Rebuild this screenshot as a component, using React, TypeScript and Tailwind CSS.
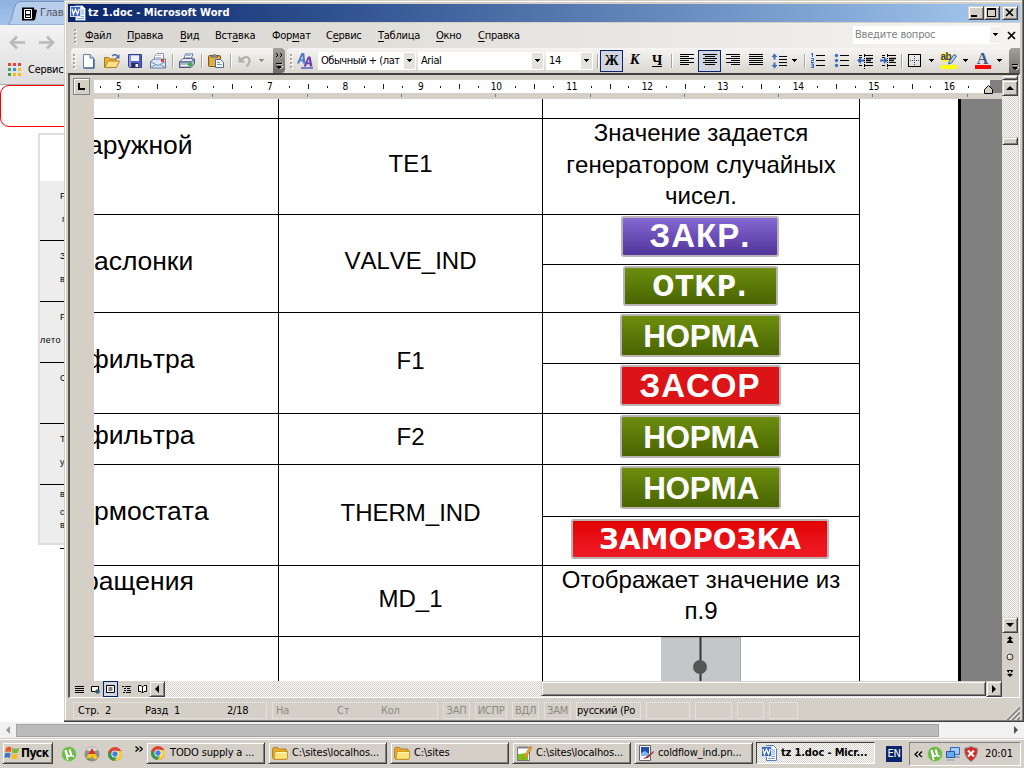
import React from 'react';
import type { ReactNode } from 'react';

const hatch = 'bg-[repeating-conic-gradient(#ffffff_0%_25%,#d4d0c8_0%_50%)] bg-[length:2px_2px]';
const raised = 'border border-t-[#d4d0c8] border-l-[#d4d0c8] border-r-[#404040] border-b-[#404040] bg-[#d4d0c8] shadow-[inset_1px_1px_0_#ffffff,inset_-1px_-1px_0_#808080]';

function Icon({ children, w = 16, h = 16, className = '' }: { children: ReactNode; w?: number; h?: number; className?: string }) {
  return (
    <svg width={w} height={h} viewBox={`0 0 ${w} ${h}`} className={`shrink-0 ${className}`}>
      {children}
    </svg>
  );
}

/* ---------- shared glyphs ---------- */
const Down = ({ className = '', fill = '#000' }: { className?: string; fill?: string }) => (
  <Icon w={7} h={4} className={className}><path d="M1 0h5v1h-1v1h-1v1h-1v-1h-1v-1h-1z" fill={fill} /></Icon>
);
const Sep = ({ className = '' }: { className?: string }) => (
  <div className={`h-[14px] w-[2px] shrink-0 border-r border-l border-l-[#a5a4a0] border-r-white ${className}`} />
);
const Handle = ({ className = '' }: { className?: string }) => (
  <Icon w={4} h={16} className={className}>
    {[1, 5, 9, 13].map((y) => (
      <g key={y}><rect x="1" y={y + 1} width="2" height="2" fill="#fff" /><rect x="0" y={y} width="2" height="2" fill="#a9a7a1" /></g>
    ))}
  </Icon>
);
const Chrome = () => (
  <Icon>
    <circle cx="8" cy="8" r="7" fill="#dd4232" />
    <path d="M1.800 4.700A7 7 0 0 0 7.300 15L10.8 9.7 8 8 5 9.7z" fill="#2f9e54" />
    <path d="M14.400 5H8.5l2.6 4.3L7.3 15A7 7 0 0 0 14.400 5z" fill="#f7cf39" />
    <circle cx="8" cy="8" r="3.6" fill="#fff" /><circle cx="8" cy="8" r="2.7" fill="#3f7fe0" />
  </Icon>
);
const Torrent = () => (
  <Icon>
    <circle cx="8" cy="8" r="7.700" fill="#a8d093" /><circle cx="8" cy="8" r="7" fill="#6fb94a" />
    <path d="M3.500 4.500l2-.700 1.600 4.600q.700 1.400 2 .700l-1.500-5.300 2-.500 1.900 6.200 1.800.200-.300 1.200-2.400.200-.800-1q-1.600 1.500-3.200.600l.900 3.200-1.600.300z" fill="#fff" />
  </Icon>
);
const Folder = () => (
  <Icon>
    <path d="M.5 13V4l1-1.5h4L7 4h7v2h1.5v7.5l-1 .9H2z" fill="#e9a923" stroke="#9b6a0e" strokeWidth=".7" />
    <path d="M3 6.5h12.5V13l-1 1.2H2z" fill="#ffe47c" stroke="#c48d18" strokeWidth=".7" /><path d="M4 7.5h10.5" stroke="#fff8c8" />
  </Icon>
);
const WordIcon = () => (
  <Icon>
    <path d="M5.5.5h7l3 3v12h-10z" fill="#fff" stroke="#5a7cc2" /><path d="M11 5h3m-3 2h3m-3 2h3m-7 2.500h7m-7 2h7" stroke="#7f9ed4" />
    <rect x=".5" y="1.500" width="10" height="10" fill="#3c68b8" stroke="#cfdcf3" />
    <path d="M2 4l1.400 5.200L5.500 4.300l2 4.900L9.200 4" fill="none" stroke="#fff" strokeWidth="1.300" />
  </Icon>
);

/* ---------- standard toolbar icons ---------- */
const NewDoc = () => (
  <Icon><path d="M3.500 1.500h6.500l3.500 3.500v10h-10z" fill="#fff" stroke="#6380ae" /><path d="M4 15h10V6" fill="none" stroke="#2f4f86" strokeWidth="1.200" /><path d="M10 1.500V5h3.500" fill="#cddaf0" stroke="#4c6a9e" /></Icon>
);
const OpenIcon = () => (
  <Icon><path d="M.5 14V4.500h4l1.500 1.500h6v8z" fill="#e9b43e" stroke="#a97614" /><path d="M.8 14.500L4 8h11.500l-3.200 6.500z" fill="#ffe08a" stroke="#b98318" /><path d="M8 3q3-2.500 5.500 0" fill="none" stroke="#4d6a9d" strokeWidth="1.300" /><path d="M15.500 1v4.500H11z" fill="#4d6a9d" /></Icon>
);
const SaveIcon = () => (
  <Icon><path d="M1.500 1.500h13v13h-12l-1-1z" fill="#4f5dc8" stroke="#333f94" /><path d="M2 2h2v12H2z" fill="#8794ea" /><path d="M4 2h8v6H4z" fill="#eef2fb" /><path d="M4 2.500h8" stroke="#b9c4e8" /><path d="M4.500 10h7v4.500h-7z" fill="#262e55" /><path d="M8.500 11h2.500v3H8.500z" fill="#f5f7fe" /></Icon>
);
const MailIcon = () => (
  <Icon><path d="M4.500 7V3.500L7 .5h6.500v7" fill="#fff" stroke="#8094b5" /><path d="M6 4.500h5M7 2.500h4" stroke="#b7c4da" /><path d="M.5 8.500L4 6h11.500v9H.5z" fill="#dfe8f8" stroke="#5f7baa" /><path d="M1 9l7 3.500L15 9M1 14.500l5-3m9 3l-5-3" fill="none" stroke="#6f88b2" /><rect x="11" y="6" width="3" height="3" fill="#dd402f" /></Icon>
);
const PrintIcon = () => (
  <Icon><path d="M5 6l1.500-5h7.500l-2 5z" fill="#fff" stroke="#5a74a2" /><path d="M7.500 2.500h4m-4.500 2h4" stroke="#96a9ca" /><path d="M.5 9l3.500-3.500h10.500L13 9z" fill="#e5ebf5" stroke="#53698f" /><path d="M.5 9H12l3.500-3v4.500L12 14.500H.5z" fill="#a9b8d0" stroke="#46597c" /><path d="M2 12.500h9" stroke="#fff" /><rect x="9" y="10" width="4" height="3" fill="#36b43c" /></Icon>
);
const PasteIcon = () => (
  <Icon><rect x=".5" y="2.500" width="12" height="11" rx="1" fill="#d39a34" stroke="#835b13" /><path d="M2 4h9v9H2z" fill="#e3ae45" /><path d="M3.500 4V2.500h2L6.500 1l1 1.500h2V4z" fill="#b9bfc9" stroke="#555c69" /><path d="M7.500 6.500h5l3 3v5h-8z" fill="#f9fbff" stroke="#4a6aa5" /><path d="M9 9.500h3m-3 2h5" stroke="#7595c9" /></Icon>
);
const UndoIcon = () => (
  <Icon><path d="M1.500 2.500v7h7L6 7q3-3.500 5-1 1.500 3-2.500 7l2 1q4.500-4.800 2.800-8.500Q9.800.8 4.200 5.200z" fill="#b2b0aa" /></Icon>
);
const StylesIcon = () => (
  <Icon><path d="M0 10.500L4.500 0h2.800l1 10.500H5.900l-.2-2.300H3l-1 2.300zM3.700 6.500h2L5.500 2.500z" fill="#4e79c4" /><path d="M6.500 13.500L11 3.500h2.500L15.500 13.500h-2.600l-.3-2.300H9.800l-.9 2.300zM10.500 9.500h1.900L12 6z" fill="#6d3fae" /><path d="M4 15h12" stroke="#3543bb" strokeWidth="1.200" /></Icon>
);

/* ---------- formatting icons ---------- */
function Lines({ rows }: { rows: [number, number][] }) {
  return <Icon h={13} w={14}>{rows.map(([x, w], i) => <rect key={i} x={x} y={i * 2} width={w} height="1" fill="#000" />)}</Icon>;
}
const AlignLeft = () => <Lines rows={[[0, 14], [0, 9], [0, 14], [0, 9], [0, 14], [0, 9]]} />;
const AlignCenter = () => <Lines rows={[[0, 14], [2, 10], [0, 14], [2, 10], [0, 14], [2, 10]]} />;
const AlignRight = () => <Lines rows={[[0, 14], [5, 9], [0, 14], [5, 9], [0, 14], [5, 9]]} />;
const Justify = () => <Lines rows={[[0, 14], [0, 14], [0, 14], [0, 14], [0, 14], [0, 14]]} />;
const Spacing = () => (
  <Icon><path d="M3.500.5L6.500 4h-2v2.500h-2V4h-2zM3.500 15.500L.5 12h2V9.500h2V12h2z" fill="#3e6fc4" /><path d="M8 3.500h8m-8 3h8m-8 3h8m-8 3h8" stroke="#000" /></Icon>
);
const Numbered = () => (
  <Icon>
    <path d="M6 3.500h9m-9 5h9m-9 5h9" stroke="#000" />
    <path d="M2.500 1v4M1 2h1.500M1 6.500h2.500v2H1.500v2H4M1 12h2.500v3.500H1m.5-1.700h2" fill="none" stroke="#3563bd" />
  </Icon>
);
const Bullets = () => (
  <Icon>{[3, 8, 13].map((y) => <g key={y}><circle cx="2.500" cy={y + 0.5} r="1.700" fill="#3e6fc4" /><path d={`M6 ${y + 0.5}h9`} stroke="#000" /></g>)}</Icon>
);
const IndentIcon = ({ out = false }: { out?: boolean }) => (
  <Icon>
    <path d="M2 2.500h3m2 0h9M9 5.500h7M9 7.500h5M9 9.500h7M2 12.500h3m2 0h9M2 4.500h3" stroke="#000" />
    <path d="M9 5.500h7M9 7.500h5" stroke="#000" strokeWidth="1.400" />
    <path d={out ? 'M0 7.500L4 4v2.500h4v2H4V11z' : 'M8 7.500L4 4v2.500H0v2h4V11z'} fill="#3563bd" />
    <path d="M7.500 1v15" stroke="#000" strokeDasharray="1 1" />
  </Icon>
);
const BorderIcon = () => (
  <Icon w={13} h={13}><rect x=".5" y=".5" width="12" height="12" fill="none" stroke="#000" /><path d="M6.500 2v10M2 6.500h10" stroke="#34466e" strokeDasharray="1 1" /></Icon>
);
const Highlight = () => (
  <div className="relative h-4 w-4">
    <div className="h-[9px] w-[10px] bg-[#fff34b] font-['Liberation_Sans'] text-[10px] leading-[8px] font-bold tracking-[-0.5px] text-[#37404d]">ab</div>
    <Icon className="absolute top-0 left-0"><path d="M8 9L13 1.500l2.500 1.500L10.500 10 7.500 11z" fill="#bcd1f0" stroke="#3a5c9c" /><path d="M0 12h16v4H0z" fill="#ff0" /></Icon>
  </div>
);
const FontColor = () => (
  <div className="flex h-4 w-4 flex-col items-center">
    <div className="h-3 font-['Liberation_Serif'] text-[16px] leading-[12px] font-bold text-[#39578f]">A</div>
    <div className="h-1 w-4 bg-[#f00]" />
  </div>
);
function Slot({ children, w = 'w-[23px]', className = '' }: { children: ReactNode; w?: string; className?: string }) {
  return <div className={`flex h-[22px] shrink-0 items-center justify-center ${w} ${className}`}>{children}</div>;
}
function Combo({ text, w }: { text: string; w: string }) {
  return (
    <div className={`flex h-[18px] shrink-0 overflow-hidden bg-white p-px ${w}`}>
      <div className="flex-1 overflow-hidden pl-[2px] leading-[15px] whitespace-nowrap">{text}</div>
      <div className="flex w-[11px] shrink-0 items-center justify-center bg-[#e4e2dd]"><Down /></div>
    </div>
  );
}

/* ---------- Word window ---------- */
function TitleButton({ children, className = '' }: { children: ReactNode; className?: string }) {
  return <div className={`h-[14px] w-4 ${raised} ${className}`}><Icon w={14} h={12}>{children}</Icon></div>;
}
const MENUS: [string, string, string, string][] = [
  ['', 'Ф', 'айл', 'w-[42px]'], ['', 'П', 'равка', 'w-[53px]'], ['', 'В', 'ид', 'w-[35px]'], ['Вст', 'а', 'вка', 'w-[57px]'],
  ['Фор', 'м', 'ат', 'w-[54px]'], ['С', 'е', 'рвис', 'w-[52px]'], ['', 'Т', 'аблица', 'w-[58px]'], ['', 'О', 'кно', 'w-[42px]'], ['', 'С', 'правка', 'w-[60px]'],
];

function WindowBars() {
  return (
    <>
      <div className="mx-1 mt-1 flex h-[18px] items-center bg-linear-to-r from-[#0a246a] to-[#a6caf0] pr-[2px] pl-[2px]">
        <WordIcon />
        <span className="ml-[2px] font-bold tracking-[0.04px] text-white">tz 1.doc - Microsoft Word</span>
        <TitleButton className="ml-auto"><path d="M2 8h6v2H2z" /></TitleButton>
        <TitleButton><path d="M2 1h9v9H2zM3 3v6h7V3z" fillRule="evenodd" /></TitleButton>
        <TitleButton className="ml-[2px]"><path d="M3 2l7 7m0-7l-7 7" stroke="#000" strokeWidth="1.700" /></TitleButton>
      </div>
      <div className="mx-1 mt-px flex h-[25px] items-center bg-linear-to-r from-[#d8d5cf] to-[#f5f4f2] pr-[4px] pl-[6px]">
        <Handle />
        <div className="ml-[7px] flex">
          {MENUS.map(([a, b, c, w]) => <span key={b + c} className={`shrink-0 whitespace-nowrap ${w}`}>{a}<u className="underline-offset-2">{b}</u>{c}</span>)}
        </div>
        <div className="ml-auto flex h-[18px] w-[148px] -translate-y-px items-center bg-white pl-[2px] text-[#808080]">
          <span className="flex-1 tracking-[-0.2px]">Введите вопрос</span>
          <div className="flex h-4 w-[11px] items-center justify-center bg-[#f1f0ee]"><Down /></div>
        </div>
        <Icon w={9} h={9} className="ml-[6px]"><path d="M1 1l7 7m0-7L1 8" stroke="#000" strokeWidth="1.700" /></Icon>
      </div>
      <div className="mx-1 flex h-[25px] bg-linear-to-r from-[#d8d5cf] to-[#f5f4f2] pl-[3px]">
        <div className="flex w-[214px] items-center rounded-l-sm bg-linear-to-b from-[#f6f5f3] to-[#d9d6cf] pl-[2px]">
          <Handle />
          <div className="ml-[3px]"><NewDoc /></div>
          <div className="ml-2"><OpenIcon /></div>
          <div className="ml-[7px]"><SaveIcon /></div>
          <div className="ml-[7px]"><MailIcon /></div>
          <Sep className="ml-[6px]" />
          <div className="ml-[5px]"><PrintIcon /></div>
          <Sep className="ml-[6px]" />
          <div className="ml-[5px]"><PasteIcon /></div>
          <Sep className="ml-[6px]" />
          <div className="ml-[5px]"><UndoIcon /></div>
          <Down className="ml-[5px]" fill="#8d8b86" />
          <div className="ml-auto h-full w-3 rounded-r-sm bg-linear-to-b from-[#a3a19c] to-[#6f6d68]">
            <Icon w={12} h={25}><path d="M3 5l2 2-2 2m4-4l2 2-2 2" fill="none" stroke="#000" /><path d="M4 16h6M5 18.500h5l-2.500 2.500z" stroke="#fff" /><path d="M3 15h6v1H3zM3 18h6l-3 3z" /></Icon>
          </div>
        </div>
        <div className="ml-[2px] flex flex-1 items-center rounded-l-sm bg-linear-to-b from-[#f6f5f3] to-[#d9d6cf] pl-[3px]">
          <Handle />
          <div className="ml-[3px]"><StylesIcon /></div>
          <div className="ml-[5px] flex gap-[2px]">
            <Combo text="Обычный + (лат" w="w-[98px] tracking-[-0.45px]" /><Combo text="Arial" w="w-[126px] tracking-[-0.4px]" /><Combo text="14" w="w-[47px]" />
          </div>
          <Sep className="ml-1" />
          <Slot className="ml-px border border-[#0a246a] bg-[#d2d5de] font-['Liberation_Serif'] text-[14px] font-bold">Ж</Slot>
          <Slot className="pb-px font-['Liberation_Serif'] text-[14px] font-bold italic">К</Slot>
          <Slot className="pr-px font-['Liberation_Serif'] text-[14px] font-bold underline underline-offset-1">Ч</Slot>
          <Sep className="ml-[2px]" />
          <Slot className="ml-[2px]"><AlignLeft /></Slot>
          <Slot className="border border-[#0a246a] bg-[#d2d5de]"><AlignCenter /></Slot>
          <Slot><AlignRight /></Slot><Slot><Justify /></Slot><Slot><Spacing /></Slot>
          <Down className="ml-px" /><Sep className="ml-[6px]" />
          <Slot className="ml-px pr-px pb-px"><Numbered /></Slot><Slot className="pb-px"><Bullets /></Slot><Slot><IndentIcon out /></Slot><Slot><IndentIcon /></Slot>
          <Sep className="ml-[2px]" />
          <Slot><BorderIcon /></Slot><Down className="ml-[2px]" />
          <Slot className="ml-[2px]"><Highlight /></Slot><Down className="ml-[2px]" />
          <Slot className="ml-[2px]"><FontColor /></Slot><Down className="ml-[2px]" />
          <div className="ml-auto h-full w-[11px] rounded-tl-sm bg-linear-to-b from-[#a3a19c] to-[#6f6d68]">
            <Icon w={11} h={25}><path d="M4 17h6M5 19.500h5l-2.500 2.500z" stroke="#fff" /><path d="M3 16h6v1H3zM3 19h6l-3 3z" /></Icon>
          </div>
        </div>
      </div>
    </>
  );
}

function Ruler() {
  const marks: ReactNode[] = [];
  for (let q = -3; q <= 45; q++) {
    const x = Math.round(25 + q * 18.87);
    if (q % 4 === 0) continue;
    marks.push(q % 2 === 0 ? <rect key={q} x={x} y="4" width="1" height="5" fill="#222" /> : <rect key={q} x={x} y="6" width="1" height="2" fill="#222" />);
  }
  const tabs = Array.from({ length: 10 }, (_, i) => Math.round(24 + i * 94.3));
  return (
    <div className="flex h-6 pt-[5px]">
      <div className="w-6">
        <div className="-mt-[2px] ml-[3px] flex h-[17px] w-[17px] items-center justify-center border border-[#808080] bg-[#d4d0c8] shadow-[inset_1px_1px_0_#fff]">
          <Icon w={7} h={7}><path d="M0 0h2v5h5v2H0z" /></Icon>
        </div>
      </div>
      <div className="w-[908px]">
        <div className="relative h-[13px] bg-white">
          <Icon w={908} h={13} className="absolute top-0 left-0">{marks}<rect x="896" width="12" height="13" fill="#808080" /></Icon>
          <div className="flex pl-[5px]">
            {Array.from({ length: 12 }, (_, i) => <span key={i} className="w-[75.5px] shrink-0 pr-[36px] text-center text-[10px] leading-[13px] tracking-[-0.2px]">{i + 5}</span>)}
          </div>
          <Icon w={9} h={9} className="absolute top-[5px] left-[890px]"><path d="M.5 8.500V4.500L4.500.5l4 4v4z" fill="#d4d0c8" stroke="#000" /></Icon>
        </div>
        <Icon w={908} h={6} className="block">{tabs.map((x) => <rect key={x} x={x} y="1" width="1" height="3" fill="#808080" />)}</Icon>
      </div>
    </div>
  );
}

function Badge({ text, box, fill, font, pad = 'pt-[2px]' }: { text: string; box: string; fill: string; font: string; pad?: string }) {
  return (
    <div className={`flex justify-center pr-[2px] ${pad}`}>
      <div className={`flex items-center justify-center rounded-[3px] border-2 border-[#bbb3b3] font-bold whitespace-nowrap text-white ${box} ${fill} ${font}`}>{text}</div>
    </div>
  );
}
const green = 'bg-linear-to-b from-[#6d8e0f] to-[#496402]';
const Norma = ({ pad }: { pad: string }) => <Badge text="НОРМА" box="w-[161px] h-[43px] pl-[2px]" fill={green} font="font-['Liberation_Sans'] text-[31.5px] leading-[36px] tracking-[-0.3px]" pad={pad} />;

function Row({ h, left, leftPad, mid, midPad, children }: { h: string; left?: string; leftPad?: string; mid?: string; midPad?: string; children?: ReactNode }) {
  return (
    <div className={`grid grid-cols-[185px_264px_317px] ${h}`}>
      <div className={`overflow-hidden border-r border-b border-black text-[26.5px] leading-[30px] whitespace-nowrap ${leftPad ?? ''}`}>{left}</div>
      <div className={`border-r border-b border-black text-center leading-[30px] ${midPad ?? ''}`}>{mid}</div>
      <div className="border-r border-b border-black">{children}</div>
    </div>
  );
}

function DocumentPage() {
  return (
    <div className="flex h-[582px] w-[908px] overflow-hidden bg-[#808080]">
      <div className="h-full w-[864px] shrink-0 bg-white font-['Liberation_Sans'] text-[24px] tracking-normal text-black [font-kerning:none]">
        <Row h="h-5" />
        <Row h="h-24" left="аружной" leftPad="pt-[11px] [text-indent:-6px]" mid="TE1" midPad="pt-[30px]">
          <div className="-mt-[2px] text-center leading-[31.5px]">Значение задается<br />генератором случайных<br />чисел.</div>
        </Row>
        <Row h="h-[98px]" left="аслонки" leftPad="pt-[31px]" mid="VALVE_IND" midPad="pt-[31px]">
          <div className="h-[50px] border-b border-black"><Badge text="ЗАКР." box="w-[158px] h-[41px] pb-[2px]" fill="bg-linear-to-b from-[#8568d2] to-[#52349b]" font="font-['Liberation_Sans'] text-[33px] leading-[36px] tracking-[1px]" pad="pt-px" /></div>
          <Badge text="ОТКР." box="w-[155px] h-[40px]" fill={green} font="font-['DejaVu_Sans_Condensed'] text-[29px] leading-[36px] tracking-[1px]" pad="pt-px" />
        </Row>
        <Row h="h-[101px]" left="фильтра" leftPad="pt-[31px] [text-indent:-7px]" mid="F1" midPad="pt-[33px]">
          <div className="h-[51px] border-b border-black"><Norma pad="pt-px" /></div>
          <Badge text="ЗАСОР" box="w-[161px] h-[41px]" fill="bg-[#dc1418]" font="font-['Liberation_Sans'] text-[33px] leading-[36px] tracking-[1px]" pad="pt-px" />
        </Row>
        <Row h="h-[51px]" left="фильтра" leftPad="pt-[6px] [text-indent:-7px]" mid="F2" midPad="pt-[8px]"><Norma pad="pt-px" /></Row>
        <Row h="h-[101px]" left="рмостата" leftPad="pt-[31px]" mid="THERM_IND" midPad="pt-[33px]">
          <div className="h-[52px] border-b border-black"><Norma pad="pt-px" /></div>
          <Badge text="ЗАМОРОЗКА" box="w-[258px] h-[40px]" fill="bg-linear-to-b from-[#e10000] to-[#ef1b25]" font="font-['DejaVu_Sans'] [font-stretch:normal] text-[28px] leading-[35px] tracking-normal" pad="pt-[2px]" />
        </Row>
        <Row h="h-[71px]" left="ращения" leftPad="[text-indent:-10px]" mid="MD_1" midPad="pt-[18px]">
          <div className="-mt-[2px] text-center leading-[31px]">Отображает значение из<br />п.9</div>
        </Row>
        <Row h="h-[60px]">
          <div className="flex justify-center"><Icon w={80} h={45}><rect width="80" height="45" fill="#c5c6c8" /><path d="M0 .5h79.500v45" fill="none" stroke="#a9aaae" /><path d="M39.500 0v45" stroke="#333" strokeWidth="2" /><circle cx="39" cy="30" r="7" fill="#555" /></Icon></div>
        </Row>
      </div>
      <div className="h-full w-[3px] shrink-0 bg-black" />
    </div>
  );
}

function ArrowButton({ d, className = '' }: { d: string; className?: string }) {
  return <div className={`flex h-4 w-4 shrink-0 items-center justify-center ${raised} ${className}`}><Icon w={8} h={8}><path d={d} /></Icon></div>;
}

function VScroll() {
  return (
    <div className="flex h-full w-4 flex-col">
      <div className={`h-[5px] ${raised}`} />
      <ArrowButton d="M4 2l4 4H0z" />
      <div className={`flex-1 pt-[41px] ${hatch}`}><div className={`h-2 ${raised}`} /></div>
      <ArrowButton d="M0 2h8L4 6z" />
      <Icon w={16} h={48}>
        <path d="M8 3l3 3H5zM8 6l3 3H5zM7 5h2v3H7zM5 9h6v1H5z" />
        <circle cx="8" cy="24" r="3" fill="#d4d0c8" stroke="#333" /><circle cx="7" cy="23" r="1.200" fill="#fff" />
        <path d="M8 44l3-3H5zM8 41l3-3H5zM7 38h2v3H7zM5 37h6v1H5z" />
      </Icon>
    </div>
  );
}

function ViewBar() {
  return (
    <div className="flex h-4">
      <div className="flex w-20 items-center">
        <Slot w="w-4 ml-[1px]"><Icon w={9} h={9}><path d="M0 1.500h9m-9 2h9m-9 2h9m-9 2h9" stroke="#000" /></Icon></Slot>
        <Slot w="w-4"><Icon w={9} h={9}><path d="M.5 1.500h7v5h-7z" fill="#fff" stroke="#000" /><circle cx="6.500" cy="6.500" r="2.300" fill="#2b5f6f" /></Icon></Slot>
        <div className="flex h-4 w-4 items-center justify-center border border-[#0a246a] bg-[#d2d5de]"><Icon w={9} h={9}><path d="M.5.5h8v7h-8zM2.500 3h4m-4 2h4" fill="#fff" stroke="#000" /></Icon></div>
        <Slot w="w-4"><Icon w={9} h={9}><path d="M0 1.500h2m1 0h6M2 3.500h2m1 0h3M2 5.500h2m1 0h4M1 7.500h2m1 0h5" stroke="#000" /></Icon></Slot>
        <Slot w="w-4"><Icon w={9} h={9}><path d="M4.500 2L3 .5H.5v6H3L4.500 8 6 6.500h2.500v-6H6zM4.500 2v6" fill="#fff" stroke="#000" /></Icon></Slot>
      </div>
      <ArrowButton d="M2 4l4-4v8z" className="-ml-px" />
      <div className={`flex flex-1 justify-end ${hatch}`}><div className={`h-[15px] w-[445px] ${raised}`} /></div>
      <ArrowButton d="M6 4L2 0v8z" />
    </div>
  );
}

const panel = 'h-[17px] shrink-0 border border-[#e3e0d9] leading-[15px] whitespace-nowrap flex';
function StatusBar() {
  return (
    <div className="mx-1 flex h-[23px] gap-[5px] pt-[4px] pl-[5px]">
      <div className={`${panel} w-[194px] pl-1`}><span className="w-[67px] whitespace-pre">Стр.  2</span><span className="w-[82px] whitespace-pre">Разд  1</span><span>2/18</span></div>
      <div className={`${panel} w-[166px] pl-[3px] text-[#8c8a84]`}><span className="w-[61px]">На</span><span className="w-[44px]">Ст</span><span>Кол</span></div>
      <div className={`${panel} w-[27px] justify-center text-[#8c8a84]`}>ЗАП</div>
      <div className={`${panel} w-[32px] justify-center text-[#8c8a84]`}>ИСПР</div>
      <div className={`${panel} w-[27px] justify-center text-[#8c8a84]`}>ВДЛ</div>
      <div className={`${panel} w-[27px] justify-center text-[#8c8a84]`}>ЗАМ</div>
      <div className={`${panel} w-[65px] overflow-hidden`}>русский (Ро</div>
      <div className={`${panel} w-[44px]`} /><div className={`${panel} w-[37px]`} /><div className={`${panel} w-[27px]`} /><div className={`${panel} w-[29px]`} />
      <Icon w={13} h={16} className="mt-[3px] ml-auto"><path d="M0 15L13 2M5 15l8-8m-3 8l3-3" stroke="#808080" strokeWidth="2" /><path d="M-1.500 15L13 .5M3.500 15L13 5.500M8.500 15l4.500-4.500" stroke="#fff" /></Icon>
    </div>
  );
}

function WordWindow() {
  return (
    <div className="absolute top-0 left-16 flex h-[722px] w-[960px] flex-col bg-[#d4d0c8] shadow-[inset_-1px_-1px_0_#404040,inset_-2px_-2px_0_#808080,inset_1px_1px_0_#d4d0c8,inset_2px_2px_0_#fff]">
      <WindowBars />
      <div className="mr-1 ml-1 flex h-[625px] border-t-2 border-r border-b border-l-2 border-t-[#404040] border-r-white border-b-white border-l-[#555]">
        <div className="w-[932px]">
          <Ruler />
          <div className="flex"><div className="w-6 shrink-0" /><DocumentPage /></div>
          <ViewBar />
        </div>
        <div className="h-[606px] w-4"><VScroll /></div>
      </div>
      <StatusBar />
    </div>
  );
}

/* ---------- browser behind ---------- */
const SIDE: [string, string, string][] = [
  ['P', 'п', 'h-[60px]'], ['З', 'в', 'h-[61px]'], ['P', 'лето', 'h-[61px]'], ['С', '', 'h-[61px]'], ['Т', 'у', 'h-[61px]'],
];
const SQUARES = ['#e84335', '#e84335', '#e84335', '#34a853', '#4285f4', '#fbbc05', '#34a853', '#fbbc05', '#fbbc05'];

function BrowserWindow() {
  return (
    <div className="absolute top-0 left-0 flex h-[739px] w-[1024px] flex-col bg-white">
      <div className="relative h-[25px] bg-linear-to-b from-[#8fb2e0] to-[#a5c3ea]">
        <Icon w={70} h={25} className="absolute top-0 left-0"><path d="M8 25Q11 22 13 13 15 1.500 20 1.500H70V25z" fill="#b6cdec" stroke="#7894bb" /><path d="M22 7.500h12v13H22z" fill="#000" /><path d="M24.500 9.500h7v9h-7z" fill="none" stroke="#fff" /><path d="M32 9l5 1-2 10h-3z" /><path d="M26 11h4v3h-4zM26 15.500h4v1.500h-4z" fill="#fff" /></Icon>
        <span className="absolute top-[6px] left-10 text-[#555]">Главная</span>
      </div>
      <div className="flex h-[60px] flex-col border-b border-[#aaa] bg-linear-to-b from-[#f3f3f3] to-[#dedede]">
        <Icon w={64} h={34}><path d="M11 17.500h14M17 11.500l-6 6 6 6M39 17.500h14m-6-6l6 6-6 6" fill="none" stroke="#b9b9b9" strokeWidth="2.500" /></Icon>
        <div className="flex items-center pt-[2px] pl-2">
          <div className="grid grid-cols-3 gap-x-[2px] gap-y-[2px]">{SQUARES.map((c, i) => <div key={i} className="h-[3px] w-[3px]" style={{ backgroundColor: c }} />)}</div>
          <span className="ml-[7px] pt-px leading-[16px]">Сервисы</span>
        </div>
      </div>
      <div className="h-[42px] w-[1000px] rounded-[9px] border border-[#f00]" />
      <div className="mt-[6px] ml-[38px] h-[412px] w-[900px] border-2 border-[#dedede] bg-[#ededed]">
        <div className="h-[46px] bg-white" />
        {SIDE.map(([a, b, h], i) => (
          <div key={i} className={`flex w-[26px] flex-col overflow-hidden font-['Liberation_Sans'] text-[9px] leading-[11px] whitespace-nowrap ${h}`}>
            <span className="mt-[10px] ml-5">{a}</span><span className={`mt-[12px] ${b === 'лето' ? 'tracking-[0.5px]' : b === 'п' ? 'ml-[22px]' : 'ml-5'}`}>{b}</span>
            <span className="mt-auto h-px bg-black" />
          </div>
        ))}
        <div className="flex flex-col pt-[4px] pl-5 font-['Liberation_Sans'] text-[9px] leading-[11px]"><span>в</span><span className="mt-[7px]">с</span><span className="mt-[2px]">в</span></div>
      </div>
      <div className="mt-[3px] ml-[60px] h-px w-4 bg-black" />
      <div className="mt-auto flex h-[17px] items-center bg-[#f1f1f1] pb-px">
        <Icon w={16} h={16}><path d="M6 8l4-4v8z" fill="#999" /></Icon>
        <div className="h-[13px] w-[923px] border border-[#a3a3a3] bg-[#bbb]" />
        <Icon w={16} h={16} className="ml-auto"><path d="M10 8L6 4v8z" fill="#505050" /></Icon>
      </div>
    </div>
  );
}

/* ---------- taskbar ---------- */
const Notepad = () => <Icon><path d="M1.500 2.500h12v13h-12z" fill="#fff" stroke="#777" /><path d="M3 1v3m2-3v3m2-3v3m2-3v3m2-3v3" stroke="#888" /><path d="M2 9l10-1v7H2z" fill="#7ac31c" /><path d="M14.500 1L8 11l-1 3 3-1.500L16 3z" fill="#f2a32a" stroke="#9e5b12" strokeWidth=".5" /></Icon>;
const Paint = () => <Icon><path d="M1.500.5h11v15h-11z" fill="#f6f8ff" stroke="#666" /><path d="M3 2h8v9H3z" fill="#204ea8" /><path d="M3 8l4-2 4 3v2H3z" fill="#88b7ef" /><path d="M15.500 6L9 11l-4 3 5-1 6-6z" fill="#9b3b31" /></Icon>;
const TASKS: [string, ReactNode][] = [
  ['TODO supply a ...', <Chrome />], ['C:\\sites\\localhos...', <Folder />], ['C:\\sites', <Folder />], ['C:\\sites\\localhos...', <Notepad />], ['coldflow_ind.pn...', <Paint />],
];

function Taskbar() {
  return (
    <div className="absolute top-[738px] left-0 flex h-[30px] w-[1024px] items-start border-t border-[#d4d0c8] bg-[#d4d0c8] pt-[3px] pl-[2px] shadow-[inset_0_1px_0_#fff]">
      <div className={`flex h-[22px] w-[51px] items-center pl-[1px] ${raised}`}>
        <Icon><path d="M2 3q3-2 5.500-.5L6.800 7Q4 5.800 1.300 7.300z" fill="#e8562a" /><path d="M8.500 3q3 1.500 6.500 0l-.8 4.500q-3 1.500-6.300 0z" fill="#79b83c" /><path d="M1 8.500q3-1.500 5.500-.3L5.800 13Q3 11.500.3 13z" fill="#3c78d0" /><path d="M7.700 8.800q3 1.400 6.300 0l-.8 4.700q-3 1.400-6.300 0z" fill="#f3bd29" /></Icon>
        <span className="ml-[1px] text-[12px] font-bold tracking-[-0.6px]">Пуск</span>
      </div>
      <div className="ml-2 flex h-[22px] items-center gap-[7px] pt-[2px]">
        <Torrent />
        <Icon><circle cx="8" cy="8" r="7.500" fill="#8f8f8f" /><path d="M2 4a7.500 7.500 0 0 1 12 0L8 6z" fill="#ddd" /><path d="M8 2l3.500 6H4.500z" fill="#d9321f" /><path d="M4.500 8h7l2.500 5H10L8 10l-1.500 3H2z" fill="#f5c71b" /><path d="M2 12.500h5l-2 1.500z" fill="#398b45" /></Icon>
        <Chrome />
      </div>
      <Icon w={8} h={7} className="mt-1 ml-[12px]"><path d="M.5.5l3 2.500-3 2.500m4-5l3 2.500-3 2.500" fill="none" stroke="#000" strokeWidth="1.200" /></Icon>
      <div className="ml-[3px] flex gap-[3px] tracking-[-0.15px]">
        {TASKS.map(([t, icon], i) => (
          <div key={i} className={`flex h-[22px] w-[119px] items-center pl-[3px] ${raised}`}>{icon}<span className="ml-1 whitespace-nowrap">{t}</span></div>
        ))}
        <div className={`flex h-[22px] w-[119px] items-center border border-t-[#404040] border-r-white border-b-white border-l-[#404040] pl-1 ${hatch}`}><WordIcon /><span className="ml-1 font-bold whitespace-nowrap">tz 1.doc - Micr...</span></div>
      </div>
      <div className="mt-1 ml-[11px] h-4 w-4 bg-[#0a246a] text-center leading-4 tracking-[-0.3px] text-white">EN</div>
      <div className="ml-[7px] flex h-6 w-[112px] items-center border border-t-[#808080] border-r-white border-b-white border-l-[#808080] pl-1">
        <Icon w={9} h={7}><path d="M4 .5L1 3.500l3 2.500m4-5.500l-3 3 3 2.500" fill="none" stroke="#000" strokeWidth="1.200" /></Icon>
        <div className="ml-1 flex gap-[2px]">
          <Torrent />
          <Icon><path d="M5.500 1.500h9v7h-9z" fill="#9fccf8" stroke="#3167b5" /><path d="M8 10h6l1 2H8z" fill="#8ea5c8" /><path d="M1.500 5.500h8v6h-8z" fill="#66aaf2" stroke="#2857a4" /><path d="M2 13h7l1 2H1z" fill="#a8b5ca" /></Icon>
          <Icon><path d="M8 .5l6.500 2q.5 9-6.500 13-7-4-6.500-13z" fill="#d42b25" stroke="#8f9aab" /><path d="M5 4.500l6 6m0-6l-6 6" stroke="#fff" strokeWidth="2" /></Icon>
        </div>
        <span className="ml-auto pr-[7px] tracking-[-0.1px]">20:01</span>
      </div>
    </div>
  );
}

export default function App() {
  return (
    <div className="relative h-[768px] w-[1024px] overflow-hidden bg-white font-['DejaVu_Sans_Condensed','DejaVu_Sans',sans-serif] text-[11px] leading-[14px] tracking-[-0.25px] text-black [font-stretch:condensed]">
      <BrowserWindow />
      <WordWindow />
      <Taskbar />
    </div>
  );
}
